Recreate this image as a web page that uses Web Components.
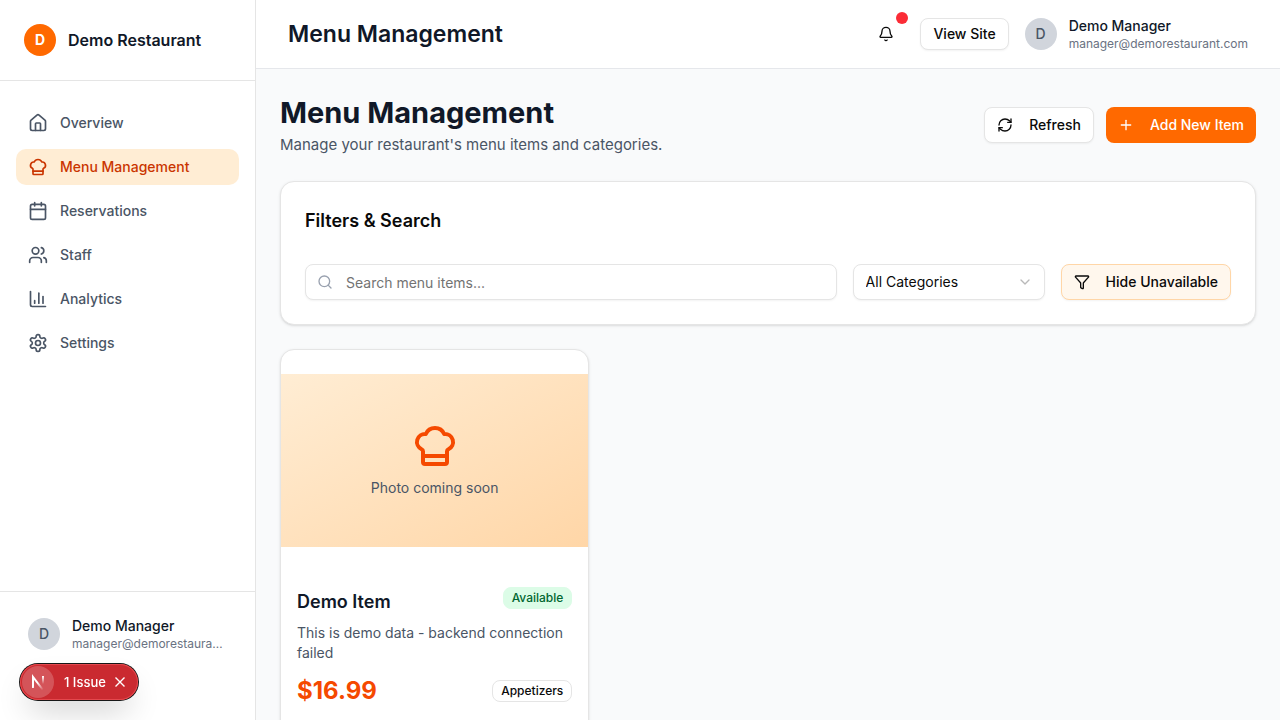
<!DOCTYPE html>
<html lang="en">
<head>
<meta charset="utf-8">
<meta name="viewport" content="width=device-width, initial-scale=1">
<title>Menu Management</title>
<style>
body { margin: 0; font-family: Inter, "Liberation Sans", sans-serif; font-size: 14px; line-height: 20px; color: #0a0a0a; background: #f9fafb; }
</style>
</head>
<body>
<app-shell>
  <side-bar slot="sidebar" restaurant="Demo Restaurant">
    <nav-item icon="house" href="#overview">Overview</nav-item>
    <nav-item icon="chef" href="#menu" active>Menu Management</nav-item>
    <nav-item icon="calendar" href="#reservations">Reservations</nav-item>
    <nav-item icon="users" href="#staff">Staff</nav-item>
    <nav-item icon="chart" href="#analytics">Analytics</nav-item>
    <nav-item icon="settings" href="#settings">Settings</nav-item>
    <user-card slot="user" name="Demo Manager" email="manager@demorestaurant.com"></user-card>
  </side-bar>
  <top-bar slot="header">
    <span slot="title">Menu Management</span>
    <notify-button></notify-button>
    <ui-button size="sm">View Site</ui-button>
    <user-card name="Demo Manager" email="manager@demorestaurant.com"></user-card>
  </top-bar>
  <page-heading>
    <span slot="title">Menu Management</span>
    <span slot="subtitle">Manage your restaurant's menu items and categories.</span>
    <ui-button slot="actions" icon="refresh">Refresh</ui-button>
    <ui-button slot="actions" icon="plus" variant="primary">Add New Item</ui-button>
  </page-heading>
  <filter-card></filter-card>
  <menu-grid>
    <menu-item-card price="$16.99" status="Available" category="Appetizers">
      <span slot="name">Demo Item</span>
      This is demo data - backend connection failed
    </menu-item-card>
  </menu-grid>
</app-shell>
<issue-toast></issue-toast>

<script>
const ICONS = {
  house: '<path d="M15 21v-8a1 1 0 0 0-1-1h-4a1 1 0 0 0-1 1v8"/><path d="M3 10a2 2 0 0 1 .709-1.528l7-5.999a2 2 0 0 1 2.582 0l7 5.999A2 2 0 0 1 21 10v9a2 2 0 0 1-2 2H5a2 2 0 0 1-2-2z"/>',
  chef: '<path d="M17 21a1 1 0 0 0 1-1v-5.35c0-.457.316-.844.727-1.041a4 4 0 0 0-2.134-7.589 5 5 0 0 0-9.186 0 4 4 0 0 0-2.134 7.588c.411.198.727.585.727 1.041V20a1 1 0 0 0 1 1Z"/><path d="M6 17h12"/>',
  calendar: '<path d="M8 2v4"/><path d="M16 2v4"/><rect width="18" height="18" x="3" y="4" rx="2"/><path d="M3 10h18"/>',
  users: '<path d="M16 21v-2a4 4 0 0 0-4-4H6a4 4 0 0 0-4 4v2"/><path d="M16 3.128a4 4 0 0 1 0 7.744"/><path d="M22 21v-2a4 4 0 0 0-3-3.87"/><circle cx="9" cy="7" r="4"/>',
  chart: '<path d="M3 3v16a2 2 0 0 0 2 2h16"/><path d="M18 17V9"/><path d="M13 17V5"/><path d="M8 17v-3"/>',
  settings: '<path d="M12.22 2h-.44a2 2 0 0 0-2 2v.18a2 2 0 0 1-1 1.73l-.43.25a2 2 0 0 1-2 0l-.15-.08a2 2 0 0 0-2.73.73l-.22.38a2 2 0 0 0 .73 2.73l.15.1a2 2 0 0 1 1 1.72v.51a2 2 0 0 1-1 1.74l-.15.09a2 2 0 0 0-.73 2.73l.22.38a2 2 0 0 0 2.73.73l.15-.08a2 2 0 0 1 2 0l.43.25a2 2 0 0 1 1 1.73V20a2 2 0 0 0 2 2h.44a2 2 0 0 0 2-2v-.18a2 2 0 0 1 1-1.73l.43-.25a2 2 0 0 1 2 0l.15.08a2 2 0 0 0 2.73-.73l.22-.39a2 2 0 0 0-.73-2.73l-.15-.08a2 2 0 0 1-1-1.74v-.5a2 2 0 0 1 1-1.74l.15-.09a2 2 0 0 0 .73-2.73l-.22-.38a2 2 0 0 0-2.73-.73l-.15.08a2 2 0 0 1-2 0l-.43-.25a2 2 0 0 1-1-1.73V4a2 2 0 0 0-2-2z"/><circle cx="12" cy="12" r="3"/>',
  bell: '<path d="M10.268 21a2 2 0 0 0 3.464 0"/><path d="M3.262 15.326A1 1 0 0 0 4 17h16a1 1 0 0 0 .74-1.673C19.41 13.956 18 12.499 18 8A6 6 0 0 0 6 8c0 4.499-1.411 5.956-2.738 7.326"/>',
  refresh: '<path d="M3 12a9 9 0 0 1 9-9 9.75 9.75 0 0 1 6.74 2.74L21 8"/><path d="M21 3v5h-5"/><path d="M21 12a9 9 0 0 1-9 9 9.75 9.75 0 0 1-6.74-2.74L3 16"/><path d="M8 16H3v5"/>',
  plus: '<path d="M5 12h14"/><path d="M12 5v14"/>',
  search: '<path d="m21 21-4.34-4.34"/><circle cx="11" cy="11" r="8"/>',
  chevron: '<path d="m6 9 6 6 6-6"/>',
  funnel: '<path d="M10 20a1 1 0 0 0 .553.895l2 1A1 1 0 0 0 14 21v-7a2 2 0 0 1 .517-1.341L21.74 4.67A1 1 0 0 0 21 3H3a1 1 0 0 0-.742 1.67l7.225 7.989A2 2 0 0 1 10 14z"/>',
};

const RESET = '*, *::before, *::after { box-sizing: border-box; } h1, h2, h3, p { margin: 0; } button, input, select { font: inherit; color: inherit; } ';

class Base extends HTMLElement {
  connectedCallback() {
    if (this.shadowRoot) return;
    const tpl = document.createElement('template');
    tpl.innerHTML = `<style>${RESET}${this.styles()}</style>${this.markup()}`;
    this.attachShadow({ mode: 'open' }).append(tpl.content.cloneNode(true));
  }
  attr(name) { return this.getAttribute(name) || ''; }
}

customElements.define('ui-icon', class extends Base {
  styles() { return ':host { display: block; flex: none; width: 16px; height: 16px; } svg { display: block; width: 100%; height: 100%; }'; }
  markup() { return `<svg viewBox="0 0 24 24" fill="none" stroke="currentColor" stroke-width="2" stroke-linecap="round" stroke-linejoin="round" aria-hidden="true">${ICONS[this.attr('name')]}</svg>`; }
});

customElements.define('app-shell', class extends Base {
  styles() { return `
    :host { display: flex; height: 100vh; overflow: hidden; }
    aside { flex: none; width: 256px; }
    .main { flex: 1; min-width: 0; display: flex; flex-direction: column; }
    main { flex: 1; min-height: 0; overflow-y: auto; scrollbar-width: none; padding: 24px; display: flex; flex-direction: column; gap: 24px; }`; }
  markup() { return '<aside><slot name="sidebar"></slot></aside><div class="main"><slot name="header"></slot><main><slot></slot></main></div>'; }
});

customElements.define('side-bar', class extends Base {
  styles() { return `
    :host { display: flex; flex-direction: column; height: 100%; box-sizing: border-box; background: #fff; border-right: 1px solid #e5e5e5; }
    .brand { display: flex; align-items: center; gap: 12px; padding: 24px; border-bottom: 1px solid #e5e5e5; color: #101828; font-size: 16px; line-height: 32px; font-weight: 600; }
    .logo { width: 32px; height: 32px; border-radius: 50%; background: #ff6900; color: #fff; font-size: 14px; font-weight: 700; text-align: center; }
    nav { flex: 1; display: flex; flex-direction: column; gap: 8px; padding: 24px 16px; }
    .foot { border-top: 1px solid #e5e5e5; padding: 24px 28px 68px; }`; }
  markup() { return `<div class="brand"><span class="logo">D</span><span>${this.attr('restaurant')}</span></div><nav><slot></slot></nav><div class="foot"><slot name="user"></slot></div>`; }
});

customElements.define('nav-item', class extends Base {
  styles() { return `
    :host { display: block; }
    a { display: flex; align-items: center; gap: 12px; padding: 8px 12px; border-radius: 10px; color: #4a5565; font-weight: 500; text-decoration: none; }
    :host([active]) a { background: #ffedd4; color: #ca3500; }
    ui-icon { width: 20px; height: 20px; }`; }
  markup() { return `<a href="${this.attr('href')}"><ui-icon name="${this.attr('icon')}"></ui-icon><span><slot></slot></span></a>`; }
});

customElements.define('user-card', class extends Base {
  styles() { return `
    :host { display: flex; align-items: center; gap: 12px; min-width: 0; }
    .avatar { flex: none; width: 32px; height: 32px; border-radius: 50%; background: #d1d5dc; color: #4a5565; font-weight: 500; line-height: 32px; text-align: center; }
    .text { min-width: 0; }
    p { overflow: hidden; text-overflow: ellipsis; white-space: nowrap; }
    .name { color: #101828; font-weight: 500; }
    .email { color: #6a7282; font-size: 12px; line-height: 16px; }`; }
  markup() { return `<span class="avatar">D</span><div class="text"><p class="name">${this.attr('name')}</p><p class="email">${this.attr('email')}</p></div>`; }
});

customElements.define('top-bar', class extends Base {
  styles() { return `
    :host { display: block; background: #fff; border-bottom: 1px solid #e5e7eb; }
    header { display: flex; align-items: center; justify-content: space-between; padding: 16px 32px; }
    h1 { font-size: 23px; line-height: 36px; font-weight: 600; color: #101828; }
    .right { display: flex; align-items: center; gap: 16px; }`; }
  markup() { return '<header><h1><slot name="title"></slot></h1><div class="right"><slot></slot></div></header>'; }
});

customElements.define('notify-button', class extends Base {
  styles() { return `
    :host { display: block; position: relative; }
    button { display: block; border: 0; background: none; padding: 8px 10px; border-radius: 8px; }
    .dot { position: absolute; top: -6px; right: -4px; width: 12px; height: 12px; border-radius: 50%; background: #fb2c36; }`; }
  markup() { return '<button type="button" aria-label="Notifications"><ui-icon name="bell"></ui-icon></button><span class="dot"></span>'; }
});

customElements.define('ui-button', class extends Base {
  styles() { return `
    :host { display: block; flex: none; }
    button { display: flex; align-items: center; gap: 16px; height: 36px; padding: 0 12px; border: 1px solid #e5e5e5; border-radius: 8px; background: #fff; color: #0a0a0a; font-weight: 500; white-space: nowrap; box-shadow: 0 1px 2px rgba(0,0,0,.05); }
    :host([size=sm]) button { height: 32px; }
    :host([variant=primary]) button { background: #ff6900; border: 0; color: #fff; box-shadow: none; }
    :host([variant=soft]) button { background: #fff7ed; border-color: #ffd6a7; }`; }
  markup() {
    const icon = this.attr('icon');
    return `<button type="button">${icon ? `<ui-icon name="${icon}"></ui-icon>` : ''}<span><slot></slot></span></button>`;
  }
});

customElements.define('page-heading', class extends Base {
  styles() { return `
    :host { display: flex; align-items: center; justify-content: space-between; gap: 24px; }
    .text { display: flex; flex-direction: column; }
    h2 { font-size: 29px; line-height: 40px; font-weight: 700; color: #101828; }
    p { font-size: 15px; line-height: 24px; color: #4a5565; }
    .actions { display: flex; gap: 12px; }`; }
  markup() { return '<div class="text"><h2><slot name="title"></slot></h2><p><slot name="subtitle"></slot></p></div><div class="actions"><slot name="actions"></slot></div>'; }
});

const CARD = 'box-sizing: border-box; background: #fff; border: 1px solid #e5e5e5; border-radius: 14px; box-shadow: 0 1px 3px rgba(0,0,0,.1), 0 1px 2px -1px rgba(0,0,0,.1);';

customElements.define('filter-card', class extends Base {
  styles() { return `
    :host { display: flex; flex-direction: column; gap: 28px; padding: 24px; ${CARD} }
    h3 { font-size: 18px; line-height: 30px; font-weight: 600; }
    .row { display: flex; gap: 16px; }
    .field { position: relative; }
    .search { flex: 1; }
    input, select { display: block; width: 100%; height: 36px; margin: 0; border: 1px solid #e5e5e5; border-radius: 8px; background: #fff; box-shadow: 0 1px 2px rgba(0,0,0,.05); }
    input { padding: 0 12px 0 40px; }
    input::placeholder { color: #737373; }
    .search ui-icon { position: absolute; left: 12px; top: 10px; color: #99a1af; }
    .category { width: 192px; }
    select { appearance: none; padding: 0 36px 0 12px; }
    .category ui-icon { position: absolute; right: 12px; top: 10px; color: #b9b9b9; pointer-events: none; }`; }
  markup() { return `
    <h3>Filters &amp; Search</h3>
    <div class="row">
      <div class="field search"><ui-icon name="search"></ui-icon><input type="text" placeholder="Search menu items..." aria-label="Search menu items"></div>
      <div class="field category"><select aria-label="Category"><option>All Categories</option></select><ui-icon name="chevron"></ui-icon></div>
      <ui-button icon="funnel" variant="soft">Hide Unavailable</ui-button>
    </div>`; }
});

customElements.define('menu-grid', class extends Base {
  styles() { return ':host { display: grid; grid-template-columns: repeat(3, minmax(0, 1fr)); gap: 24px; }'; }
  markup() { return '<slot></slot>'; }
});

customElements.define('menu-item-card', class extends Base {
  styles() { return `
    :host { display: flex; flex-direction: column; gap: 24px; padding: 24px 0; overflow: hidden; ${CARD} }
    .photo { display: flex; flex-direction: column; align-items: center; justify-content: center; gap: 8px; aspect-ratio: 16 / 9; background: linear-gradient(to bottom right, #ffedd4, #ffd6a7); color: #4a5565; }
    .photo ui-icon { width: 48px; height: 48px; color: #f54900; }
    .body { padding: 16px; display: flex; flex-direction: column; }
    .row { display: flex; justify-content: space-between; gap: 8px; }
    .top { align-items: flex-start; }
    h3 { font-size: 18px; line-height: 30px; font-weight: 600; color: #101828; }
    .desc { color: #4a5565; padding: 6px 0 12px; }
    .bottom { align-items: center; }
    .price { font-size: 24px; line-height: 32px; font-weight: 700; color: #f54900; }
    .badge { padding: 2px 8px; border: 1px solid #e5e5e5; border-radius: 8px; font-size: 12px; line-height: 16px; font-weight: 500; }
    .ok { background: #dcfce7; border-color: #dcfce7; color: #016630; }`; }
  markup() { return `
    <div class="photo"><ui-icon name="chef"></ui-icon><span>Photo coming soon</span></div>
    <div class="body">
      <div class="row top"><h3><slot name="name"></slot></h3><span class="badge ok">${this.attr('status')}</span></div>
      <p class="desc"><slot></slot></p>
      <div class="row bottom"><span class="price">${this.attr('price')}</span><span class="badge">${this.attr('category')}</span></div>
    </div>`; }
});

customElements.define('issue-toast', class extends Base {
  styles() { return `
    :host { position: fixed; left: 20px; bottom: 20px; display: flex; align-items: center; height: 36px; padding: 0 12px 0 2px; box-sizing: border-box; border-radius: 18px; background: #ca2a30; color: #fff; font-size: 13px; line-height: 16px; font-weight: 500;
      box-shadow: 0 0 0 1px #171717, inset 0 0 0 1px #e5484d, 0 16px 32px -8px rgba(0,0,0,.24); }
    button { display: flex; align-items: center; border: 0; padding: 0; background: none; }
    .mark { width: 32px; height: 32px; border-radius: 50%; background: rgba(255,255,255,.2); }
    .open { margin: 0 8px 0 10px; }
    svg { display: block; }`; }
  markup() { return `
    <button class="mark" type="button" aria-label="Open developer tools">
      <svg width="32" height="32" viewBox="0 0 32 32" fill="none" stroke-width="2">
        <defs>
          <linearGradient id="a" gradientUnits="userSpaceOnUse" x1="16" y1="16" x2="22" y2="23"><stop stop-color="#fff"/><stop offset="1" stop-color="#fff" stop-opacity="0"/></linearGradient>
          <linearGradient id="b" gradientUnits="userSpaceOnUse" x1="21" y1="10" x2="21" y2="18"><stop stop-color="#fff"/><stop offset="1" stop-color="#fff" stop-opacity="0"/></linearGradient>
        </defs>
        <path d="M11 22V11L21 24" stroke="url(#a)"/><path d="M21 10v8" stroke="url(#b)"/>
      </svg>
    </button>
    <button class="open" type="button">1 Issue</button>
    <button type="button" aria-label="Dismiss"><svg width="12" height="12" viewBox="0 0 12 12" fill="none" stroke="#fff" stroke-width="1.4"><path d="m1.500 1.500 9 9m0-9-9 9"/></svg></button>`; }
});
</script>
</body>
</html>
